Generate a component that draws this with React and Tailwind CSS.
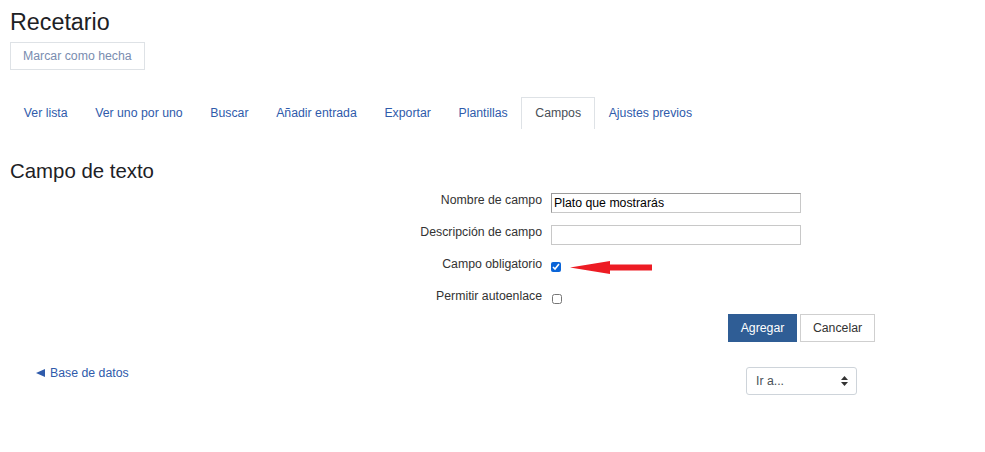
import { useState } from "react";

const tabs = [
  "Ver lista",
  "Ver uno por uno",
  "Buscar",
  "Añadir entrada",
  "Exportar",
  "Plantillas",
  "Campos",
  "Ajustes previos",
];

const RedArrow = () => (
  <svg width="83" height="14" viewBox="0 0 83 14" className="ml-[9px] mt-[7px]">
    <polygon points="0,6.5 40,0 40,3.5 82,3.5 82,9.5 40,9.5 40,13" fill="#ed1c24" />
  </svg>
);

const App = () => {
  const [required, setRequired] = useState(true);
  const [selfLink, setSelfLink] = useState(false);

  return (
    <div
      className="w-[985px] h-[452px] bg-white text-[#333] text-[12.3px]"
      style={{ fontFamily: '"Liberation Sans", Arial, sans-serif' }}
    >
      <div className="px-[10px] pt-[6px]">
        <h1 className="text-[23.3px] leading-[32px] text-[#1d2125]">Recetario</h1>
        <button className="mt-[4px] h-[28px] px-[12px] border border-[#dee2e6] text-[#7a8db0] text-[12.3px]">
          Marcar como hecha
        </button>

        {/* Tabs */}
        <div className="flex mt-[27px] h-[31px]">
          {tabs.map((t) => (
            <div
              key={t}
              className={
                t === "Campos"
                  ? "px-[12.8px] h-[32px] flex items-center border border-b-0 border-[#dee2e6] text-[#495057] bg-white"
                  : "px-[12.8px] h-[32px] flex items-center border border-transparent text-[#2f5bab]"
              }
            >
              {t}
            </div>
          ))}
        </div>

        <h2 className="mt-[31px] text-[20.4px] leading-[24px] text-[#1d2125]">Campo de texto</h2>
      </div>

      {/* Form */}
      <div className="flex flex-col mt-[7px]">
        <div className="flex items-start h-[32px]">
          <label className="w-[542px] text-right pt-[2px] leading-[16px]">Nombre de campo</label>
          <input
            className="ml-[9px] mt-[3px] w-[250px] h-[20px] border border-[#c8c8c8] border-t-[#9a9a9a] border-l-[#9a9a9a] px-[2px] text-[12.3px] text-black outline-none"
            defaultValue="Plato que mostrarás"
          />
        </div>
        <div className="flex items-start h-[32px]">
          <label className="w-[542px] text-right pt-[2px] leading-[16px]">Descripción de campo</label>
          <input className="ml-[9px] mt-[3px] w-[250px] h-[20px] border border-[#c8c8c8] px-[2px] outline-none" />
        </div>
        <div className="flex items-start h-[32px]">
          <label className="w-[542px] text-right pt-[2px] leading-[16px]">Campo obligatorio</label>
          <input
            type="checkbox"
            checked={required}
            onChange={(e) => setRequired(e.target.checked)}
            className="ml-[9px] mt-[8px] w-[10px] h-[10px] accent-[#0a65d8]"
          />
          <RedArrow />
        </div>
        <div className="flex items-start h-[32px]">
          <label className="w-[542px] text-right pt-[2px] leading-[16px]">Permitir autoenlace</label>
          <input
            type="checkbox"
            checked={selfLink}
            onChange={(e) => setSelfLink(e.target.checked)}
            className="ml-[10px] mt-[8px] w-[10px] h-[10px]"
          />
        </div>
        <div className="flex pl-[728px] mt-[-4px] gap-[3px]">
          <button className="h-[28px] w-[69px] bg-[#2f5d95] text-white text-[12.3px]">Agregar</button>
          <button className="h-[28px] w-[75px] border border-[#cfcfcf] text-[#333] text-[12.3px]">Cancelar</button>
        </div>
      </div>

      <div className="flex items-start mt-[25px]">
        <div className="w-[746px] pl-[36px] mt-[-3px]">
          <a className="text-[#2f5bab] inline-flex items-center gap-[5px] leading-[16px]">
            <svg width="9" height="8" viewBox="0 0 9 8">
              <polygon points="0,4 9,0 9,8" fill="#2f5bab" />
            </svg>
            <span>Base de datos</span>
          </a>
        </div>
        <div className="w-[111px] h-[28px] border border-[#ced4da] rounded-[3px] flex items-center justify-between pl-[9px] pr-[8px] text-[#495057]">
          <span>Ir a...</span>
          <svg width="7" height="10" viewBox="0 0 7 10">
            <polygon points="3.5,0 7,4 0,4" fill="#333" />
            <polygon points="0,6 7,6 3.5,10" fill="#333" />
          </svg>
        </div>
      </div>
    </div>
  );
};

export default App;
